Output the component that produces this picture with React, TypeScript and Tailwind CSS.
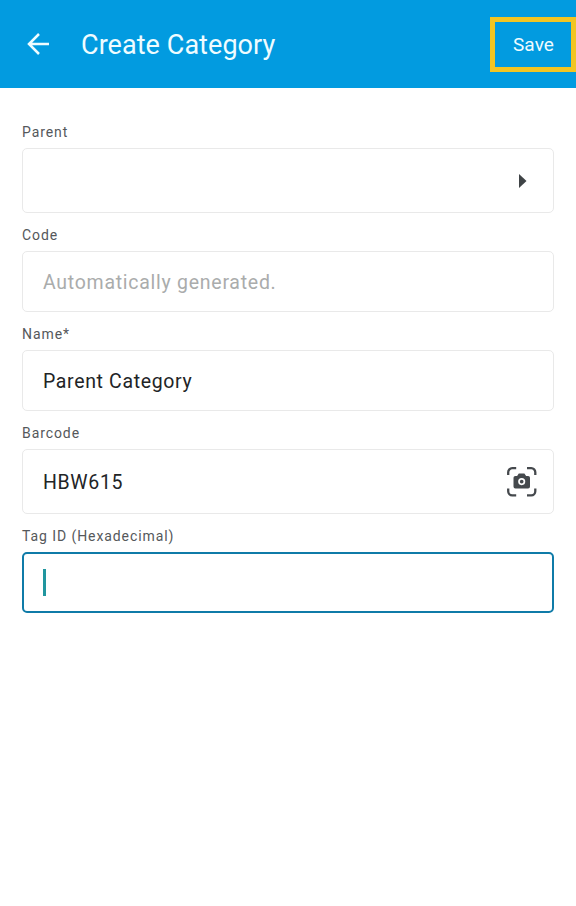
import React from 'react';

interface FieldProps {
  label: string;
  value?: string;
  placeholder?: string;
  tall?: boolean;
  focused?: boolean;
  icon?: React.ReactNode;
}

const Field: React.FC<FieldProps> = ({ label, value, placeholder, tall = false, focused = false, icon }) => {
  return (
    <div>
      <div className="h-[38px] pt-[14px] text-[14px] leading-[17px] tracking-[0.92px] text-[#55585b]">{label}</div>
      <div
        className={`flex items-center justify-between rounded-[5px] pr-[16px] ${tall ? 'h-[65px]' : 'h-[61px]'} ${
          focused ? 'border-2 border-[#0f7ba8] pl-[19px]' : 'border border-[#e9e9e9] pl-[20px]'
        }`}
      >
        {/* Text caret */}
        {focused && <span className="h-[27px] w-[3px] bg-[#21969f]" />}
        {value && <span className="pt-[2px] text-[19.5px] leading-6 tracking-[0.65px] text-[#222426]">{value}</span>}
        {placeholder && (
          <span className="pt-[2px] text-[19.5px] leading-6 tracking-[0.73px] text-[#aaacac]">{placeholder}</span>
        )}
        {icon && <span className="ml-auto">{icon}</span>}
      </div>
    </div>
  );
};

const ScanIcon = () => (
  <svg width="30" height="30" viewBox="0 0 30 30" fill="none">
    <path
      d="M1.2 8V5.2a4 4 0 0 1 4-4H9.2M20 1.2h4.3a4 4 0 0 1 4 4V8M28.3 21.5v2.8a4 4 0 0 1-4 4H20M9.2 28.3H5.2a4 4 0 0 1-4-4V21.5"
      stroke="#45494d"
      strokeWidth="2.3"
    />
    <path
      d="M11.8 6.4h5.6l1.7 2.5h2a1.9 1.9 0 0 1 1.9 1.9v8.8a1.9 1.9 0 0 1-1.9 1.9H8.4a1.9 1.9 0 0 1-1.9-1.9v-8.8a1.9 1.9 0 0 1 1.9-1.9h1.7z"
      fill="#45494d"
    />
    <circle cx="14.7" cy="14.6" r="2.7" stroke="#fff" strokeWidth="1.7" />
  </svg>
);

export default function App() {
  return (
    <div className="h-[906px] w-[576px] overflow-hidden bg-white font-['Roboto',sans-serif]">
      <header className="flex h-[88px] items-center bg-[#029be0] pl-[27px] text-[#effcff]">
        <svg width="23" height="22" viewBox="0 0 23 22" fill="none" stroke="currentColor" strokeWidth="2.5">
          <path d="M12 1 2 11l10 10M2 11h20" />
        </svg>
        <h1 className="ml-[31px] pt-[2px] text-[27px] leading-8 tracking-[0.06px]">Create Category</h1>
        <button className="ml-auto flex h-[55px] w-[86px] items-center justify-center border-[5px] border-[#f2c522] pt-[2px] pl-[1px] text-[19px] tracking-[0.1px]">
          Save
        </button>
      </header>

      <main className="px-[22px] pt-[22px]">
        <Field
          label="Parent"
          tall
          icon={
            <svg className="mr-[10px]" width="8" height="14" viewBox="0 0 8 14" fill="#3f4346">
              <path d="M0 0v14l7.5-7z" />
            </svg>
          }
        />
        <Field label="Code" placeholder="Automatically generated." />
        <Field label="Name*" value="Parent Category" />
        <Field label="Barcode" value="HBW615" tall icon={<ScanIcon />} />
        <Field label="Tag ID (Hexadecimal)" focused />
      </main>
    </div>
  );
}
